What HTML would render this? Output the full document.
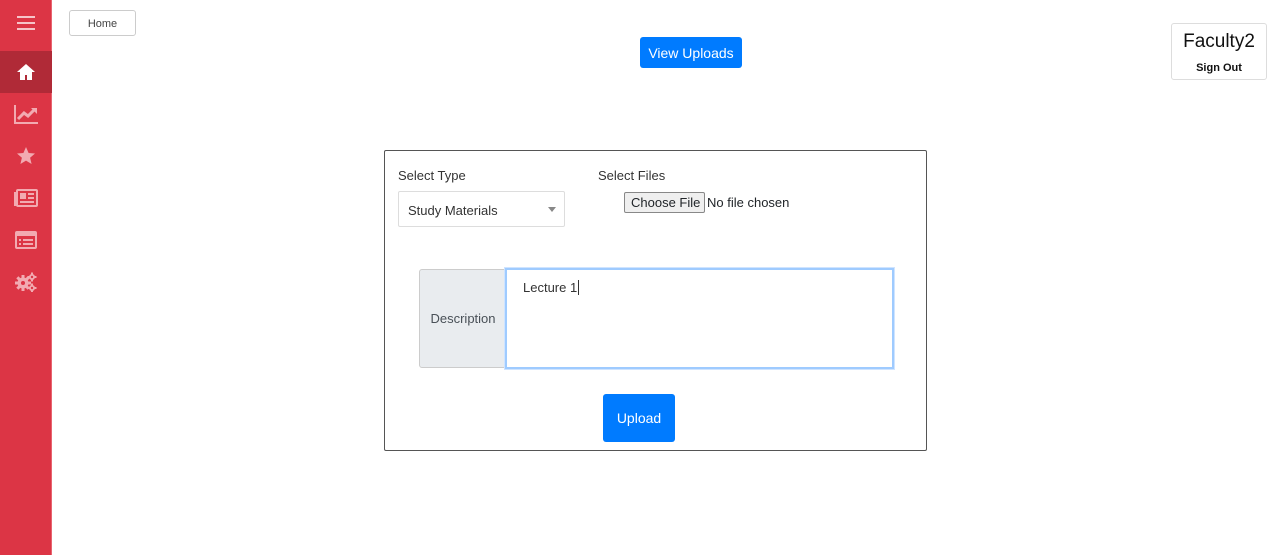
<!DOCTYPE html>
<html><head><meta charset="utf-8"><style>
*{box-sizing:border-box;margin:0;padding:0}
body{width:1280px;height:555px;background:#fff;font-family:"Liberation Sans",sans-serif;color:#212529;position:relative;overflow:hidden}
.sb{position:absolute;left:0;top:0;width:52px;height:555px;background:#dc3545;border-right:1px solid #e8646f}
.it{position:absolute;left:0;width:52px;height:42px;display:flex;align-items:center;justify-content:center}
.act{background:#b02a37}
.home{position:absolute;left:69px;top:10px;width:67px;height:26px;border:1px solid #ccc;border-radius:3px;font-size:11px;color:#444;display:flex;align-items:center;justify-content:center;padding-top:2px}
.vu{position:absolute;left:640px;top:37px;width:102px;height:31px;background:#007bff;border-radius:3px;color:#fff;font-size:14px;display:flex;align-items:center;justify-content:center}
.fac{position:absolute;left:1171px;top:23px;width:96px;height:57px;border:1px solid #ddd;border-radius:3px;text-align:center}
.fac .n{font-size:19px;margin-top:7px;color:#111}
.fac .s{font-size:11px;font-weight:bold;margin-top:9px;color:#111}
.card{position:absolute;left:384px;top:150px;width:543px;height:301px;border:1px solid #555;border-radius:2px}
.lbl{position:absolute;font-size:13px;color:#333}
.sel{position:absolute;left:13px;top:40px;width:167px;height:36px;border:1px solid #ddd;border-radius:2px;font-size:13px;padding:11px 0 0 9px;color:#333}
.sel:after{content:"";position:absolute;right:8px;top:15px;border:4px solid transparent;border-top:5px solid #888}
.cf{position:absolute;left:239px;top:41px;height:21px;width:81px;border:1px solid #888;background:#efefef;border-radius:2px;font-size:13px;padding:2px 0 0 6px}
.nf{position:absolute;left:322px;top:44px;font-size:13px}
.desc{position:absolute;left:34px;top:118px;width:88px;height:99px;background:#e9ecef;border:1px solid #ccc;border-radius:3px 0 0 3px;font-size:13px;color:#495057;display:flex;align-items:center;justify-content:center}
.ta{position:absolute;left:120px;top:117px;width:389px;height:101px;border:2px solid #9fcbff;box-shadow:0 0 0 1px #cfe4ff;font-size:13px;color:#333;padding:10px 0 0 16px}
.up{position:absolute;left:218px;top:243px;width:72px;height:48px;background:#007bff;border-radius:3px;color:#fff;font-size:14px;display:flex;align-items:center;justify-content:center}
</style></head><body>
<div class="sb">
<div class="it" style="top:2px"><svg width="18" height="14"><rect y="0" width="18" height="2" fill="#f6c4c9"/><rect y="6" width="18" height="2" fill="#f6c4c9"/><rect y="12" width="18" height="2" fill="#f6c4c9"/></svg></div>
<div class="it act" style="top:51px"><svg width="20" height="18"><path d="M10 1L1 9h3v8h5v-5h2v5h5V9h3z" fill="#fff"/></svg></div>
<div class="it" style="top:93px"><svg width="24" height="20"><path d="M1 1v18h23" stroke="#f2aab1" stroke-width="2" fill="none"/><path d="M4 15l6-6 4 3 7-7" stroke="#f2aab1" stroke-width="3" fill="none"/><path d="M17 4h6v6z" fill="#f2aab1"/></svg></div>
<div class="it" style="top:135px"><svg width="20" height="20"><path d="M10 1l2.6 6 6.4.5-4.9 4.2 1.5 6.3L10 14.6 4.4 18l1.5-6.3L1 7.5l6.4-.5z" fill="#f2aab1"/></svg></div>
<div class="it" style="top:177px"><svg width="24" height="18"><rect x="3" y="1" width="20" height="16" rx="1" fill="none" stroke="#f2aab1" stroke-width="2"/><path d="M3 4H1v12h2" stroke="#f2aab1" stroke-width="2" fill="none"/><rect x="6" y="4" width="6" height="6" fill="#f2aab1"/><rect x="14" y="4" width="6" height="2" fill="#f2aab1"/><rect x="14" y="8" width="6" height="2" fill="#f2aab1"/><rect x="6" y="12" width="14" height="2" fill="#f2aab1"/></svg></div>
<div class="it" style="top:219px"><svg width="22" height="18"><rect x="1" y="1" width="20" height="16" rx="1" fill="none" stroke="#f2aab1" stroke-width="2"/><rect x="1" y="1" width="20" height="4" fill="#f2aab1"/><rect x="4" y="8" width="2" height="2" fill="#f2aab1"/><rect x="8" y="8" width="10" height="2" fill="#f2aab1"/><rect x="4" y="12" width="2" height="2" fill="#f2aab1"/><rect x="8" y="12" width="10" height="2" fill="#f2aab1"/></svg></div>
<div class="it" style="top:261px"><svg width="22" height="20"><g fill="#f2aab1"><circle cx="8" cy="11" r="5.5"/><rect x="6.5" y="3" width="3" height="16"/><rect x="0" y="9.5" width="16" height="3"/><rect x="6.5" y="3" width="3" height="16" transform="rotate(45 8 11)"/><rect x="6.5" y="3" width="3" height="16" transform="rotate(-45 8 11)"/><circle cx="17" cy="5" r="3"/><rect x="16" y="0.5" width="2" height="9"/><rect x="12.5" y="4" width="9" height="2"/><circle cx="17" cy="16" r="3"/><rect x="16" y="11.5" width="2" height="9"/><rect x="12.5" y="15" width="9" height="2"/></g><g fill="#dc3545"><circle cx="8" cy="11" r="2"/><circle cx="17" cy="5" r="1.2"/><circle cx="17" cy="16" r="1.2"/></g></svg></div>
</div>
<div class="home">Home</div>
<div class="vu">View Uploads</div>
<div class="fac"><div class="n">Faculty2</div><div class="s">Sign Out</div></div>
<div class="card">
<div class="lbl" style="left:13px;top:17px">Select Type</div>
<div class="lbl" style="left:213px;top:17px">Select Files</div>
<div class="sel">Study Materials</div>
<div class="cf">Choose File</div>
<div class="nf">No file chosen</div>
<div class="desc">Description</div>
<div class="ta">Lecture 1<span style="border-left:1px solid #333;margin-left:1px"></span></div>
<div class="up">Upload</div>
</div>
</body></html>
